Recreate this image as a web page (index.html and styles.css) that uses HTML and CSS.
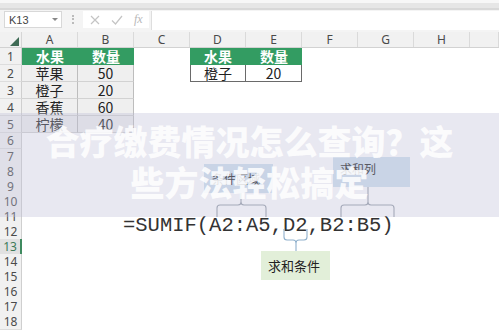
FILE: index.html
```html
<!DOCTYPE html>
<html lang="zh-CN">
<head>
    <meta charset="UTF-8">
    <meta name="viewport" content="width=device-width, initial-scale=1.0">
    <title>SUMIF</title>
    <link rel="stylesheet" href="styles.css">
</head>
<body>
    <!-- Ribbon edge -->
    <div class="ribbon"></div>

    <!-- Formula bar -->
    <div class="formula-bar">
        <div class="name-box"><span>K13</span><span class="caret"></span></div>
        <div class="grip"></div>
        <div class="fx-box">
            <svg width="10" height="10" viewBox="0 0 10 10"><path d="M1 1L9 9M9 1L1 9" stroke="#c4c4c4" stroke-width="1.2"/></svg>
            <svg width="12" height="10" viewBox="0 0 12 10"><path d="M1 5.5L4.5 9L11 1" stroke="#c4c4c4" stroke-width="1.2" fill="none"/></svg>
            <span class="fx">fx</span>
        </div>
        <div class="formula-input"></div>
    </div>

    <!-- Sheet grid -->
    <div class="sheet">
        <div class="row head">
            <div class="corner"><span class="tri"></span></div>
            <div class="ch">A</div><div class="ch">B</div><div class="ch">C</div><div class="ch">D</div>
            <div class="ch">E</div><div class="ch">F</div><div class="ch">G</div><div class="ch">H</div><div class="ch"></div>
        </div>
        <div class="row tall">
            <div class="rh">1</div>
            <div class="c th">水果</div><div class="c th">数量</div><div class="c"></div>
            <div class="c th">水果</div><div class="c th">数量</div>
        </div>
        <div class="row tall">
            <div class="rh">2</div>
            <div class="c tb">苹果</div><div class="c tb">50</div><div class="c"></div>
            <div class="c tw">橙子</div><div class="c tw">20</div>
        </div>
        <div class="row tall">
            <div class="rh">3</div>
            <div class="c tb">橙子</div><div class="c tb">20</div>
        </div>
        <div class="row tall">
            <div class="rh">4</div>
            <div class="c tb">香蕉</div><div class="c tb">60</div>
        </div>
        <div class="row tall">
            <div class="rh">5</div>
            <div class="c tb">柠檬</div><div class="c tb">40</div>
        </div>
        <div class="row mid"><div class="rh">6</div></div>
        <div class="row"><div class="rh">7</div></div>
        <div class="row"><div class="rh">8</div></div>
        <div class="row"><div class="rh">9</div></div>
        <div class="row"><div class="rh">10</div></div>
        <div class="row"><div class="rh">11</div></div>
        <div class="row"><div class="rh">12</div></div>
        <div class="row"><div class="rh active">13</div></div>
        <div class="row"><div class="rh">14</div></div>
        <div class="row"><div class="rh">15</div></div>
        <div class="row"><div class="rh">16</div></div>
        <div class="row"><div class="rh">17</div></div>
        <div class="row"><div class="rh">18</div></div>
    </div>

    <!-- Drawing shapes on the sheet -->
    <div class="shape box-range">条件区域</div>
    <div class="shape box-sum">求和列</div>
    <div class="shape formula">=SUMIF(A2:A5,D2,B2:B5)</div>
    <div class="shape box-cond">求和条件</div>
    <svg class="brackets" width="499" height="330" viewBox="0 0 499 330">
        <g fill="none" stroke="#98a0aa" stroke-width="1.1">
            <path d="M241 193L241 202Q241 205 244 205L263 205Q266 205 266 208L266 217M241 202Q241 205 238 205L220 205Q217 205 217 208L217 217"/>
            <path d="M368 187L368 202Q368 205 371 205L391 205Q394 205 394 208L394 217M368 202Q368 205 365 205L344 205Q341 205 341 208L341 217"/>
        </g>
        <path d="M284 229L284 237Q284 240 287 240L293 240Q296 240 296 243L296 251M296 243Q296 240 299 240L304 240Q307 240 307 237L307 229" fill="none" stroke="#8fb0cc" stroke-width="1.1"/>
    </svg>

    <!-- Title band over the picture -->
    <div class="band">
        <h1 class="title">合疗缴费情况怎么查询？这<br>些方法轻松搞定</h1>
    </div>
</body>
</html>
```

FILE: styles.css
```css
/* Page */
body {
    margin: 0;
    width: 499px;
    height: 330px;
    overflow: hidden;
    position: relative;
    background: #fff;
    font-family: "Noto Sans CJK SC", "Noto Sans", sans-serif;
}

/* Ribbon edge at the top */
.ribbon {
    height: 10px;
    background: linear-gradient(#f7f7f7 0 3px, #e6e6e6 3px 8px, #d8d8d8 8px);
}

/* Formula bar */
.formula-bar {
    height: 22px;
    display: flex;
    align-items: flex-start;
    padding: 1px 0 0 4px;
    box-sizing: border-box;
    background: #f4f4f4;
}
.name-box {
    width: 58px;
    height: 17px;
    box-sizing: border-box;
    background: #fff;
    border: 1px solid #d8d8d8;
    display: flex;
    align-items: center;
    justify-content: space-between;
    padding: 0 3px 0 4px;
    font: 11px "Liberation Sans", sans-serif;
    color: #444;
}
.caret {
    width: 0;
    height: 0;
    border-left: 3px solid transparent;
    border-right: 3px solid transparent;
    border-top: 3px solid #888;
}
.grip {
    width: 0;
    height: 9px;
    margin: 4px 0 0 10px;
    border-left: 2px dotted #bbb;
}
.fx-box {
    width: 66px;
    height: 17px;
    margin-left: 9px;
    box-sizing: border-box;
    background: #fff;
    display: flex;
    align-items: center;
    gap: 11px;
    padding-left: 7px;
}
.fx {
    font: italic 12px "Liberation Serif", serif;
    color: #b8b8b8;
}
.formula-input {
    flex: 1;
    height: 19px;
    margin-left: 2px;
    background: #fff;
    border-left: 1px solid #dedede;
}

/* Sheet grid */
.row {
    display: grid;
    grid-template-columns: 22px repeat(8, 56px) 1fr;
    height: 15px;
}
.row.tall {
    height: 17px;
}
.row.mid {
    height: 16px;
}
.row.head {
    height: 15px;
    background: #f1f1f1;
    border-bottom: 1px solid #d2d2d2;
}
.corner {
    position: relative;
    border-right: 1px solid #d6d6d6;
}
.tri {
    position: absolute;
    right: 2px;
    bottom: 1px;
    width: 0;
    height: 0;
    border-left: 9px solid transparent;
    border-bottom: 9px solid #3f6b55;
}
.ch {
    border-right: 1px solid #dadada;
    text-align: center;
    font: 12px/15px "Noto Sans", sans-serif;
    color: #4a4a4a;
}
.rh {
    box-sizing: border-box;
    background: #f1f1f1;
    border-right: 1px solid #cfcfcf;
    border-bottom: 1px solid #dddddd;
    text-align: center;
    font: 12px/15px "Noto Sans", sans-serif;
    color: #4a4a4a;
    display: flex;
    align-items: center;
    justify-content: center;
}
.rh.active {
    background: #e1e1e1;
    color: #3d7a58;
    border-right: 2px solid #3f8a5f;
}

/* Cells */
.c {
    box-sizing: border-box;
    text-align: center;
    font-size: 14px;
    line-height: 16px;
    color: #222;
}
.th {
    background: #339c62;
    color: #fff;
    font-weight: bold;
}
.tb {
    background: #efefef;
    border-right: 1px solid #bdbdbd;
    border-bottom: 1px solid #d2d2d2;
}
.tw {
    background: #fff;
    border: 1px solid #6a6a6a;
    border-top: none;
}
.tw + .tw {
    border-left: none;
}

/* Drawing shapes */
.shape {
    position: absolute;
}
.box-range {
    left: 204px;
    top: 164px;
    width: 69px;
    height: 29px;
    box-sizing: border-box;
    padding: 6px 0 0 8px;
    background: #cfe0ee;
    font-size: 12px;
    color: #222;
}
.box-sum {
    left: 333px;
    top: 157px;
    width: 77px;
    height: 30px;
    box-sizing: border-box;
    padding: 3px 0 0 7px;
    background: #cfe0ee;
    font-size: 12px;
    color: #222;
}
.formula {
    left: 123px;
    top: 214px;
    font: 20.5px/24px "Liberation Mono", monospace;
    color: #333;
}
.box-cond {
    left: 261px;
    top: 251px;
    width: 69px;
    height: 29px;
    box-sizing: border-box;
    padding: 5px 0 0 7px;
    background: #e2efd9;
    font-size: 13px;
    color: #222;
}
.brackets {
    position: absolute;
    left: 0;
    top: 0;
}

/* Title band */
.band {
    position: absolute;
    left: 0;
    top: 113px;
    width: 499px;
    height: 104px;
    background: rgba(190, 190, 215, 0.35);
}
.title {
    margin: 7px 0 0;
    text-align: center;
    font-size: 34px;
    line-height: 41px;
    font-weight: 900;
    color: rgba(255, 255, 255, 0.85);
}
```
